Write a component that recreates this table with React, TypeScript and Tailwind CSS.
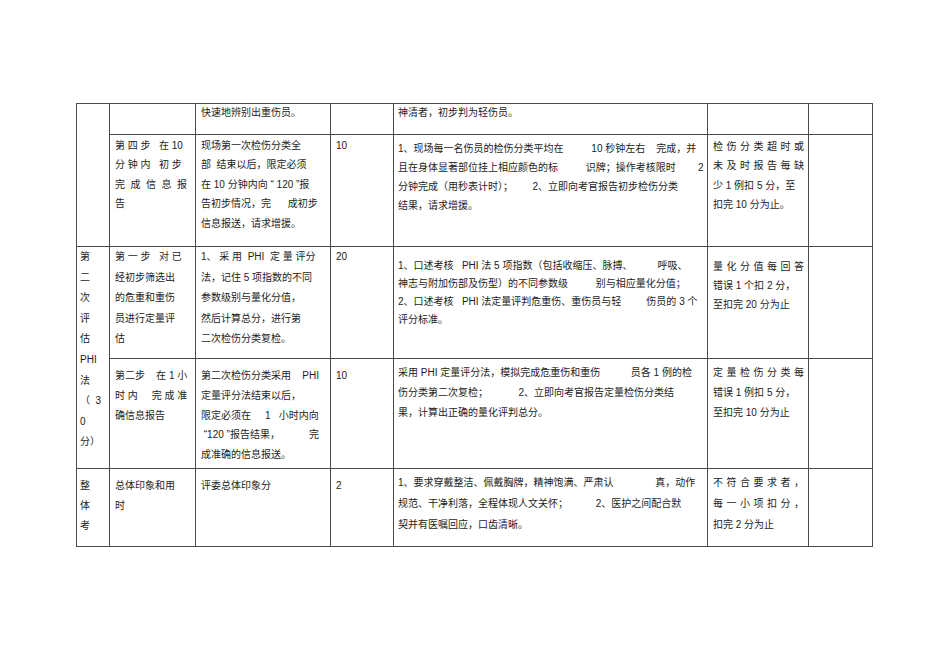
import React from "react";

type Line = string | string[];

function Cell({
  lines = [],
  cls = "",
}: {
  lines?: Line[];
  cls?: string;
}) {
  return (
    <div className={`border-r border-b border-[#4a4a4a] overflow-visible ${cls}`}>
      {lines.map((l, i) =>
        typeof l === "string" ? (
          <div key={i} className="whitespace-pre">
            {l}
          </div>
        ) : (
          <div key={i} className="flex justify-between whitespace-pre">
            {l.map((t, j) => (
              <span key={j}>{t}</span>
            ))}
          </div>
        )
      )}
    </div>
  );
}

export default function App() {
  return (
    <div className="w-[950px] h-[672px] bg-white pl-[76px] pt-[103px] text-[10px] text-[#1c1c1c] [font-family:'Liberation_Sans','Noto_Sans_CJK_SC',sans-serif]">
      <div className="grid grid-cols-[33px_86px_135px_63px_314px_101px_64px] grid-rows-[31px_112px_112px_110px_78px] w-[797px] border-l border-t border-[#4a4a4a]">
        {/* col1 rows A-B */}
        <Cell cls="row-span-2" />
        {/* Row A */}
        <Cell />
        <Cell cls="pl-[5px] leading-[18px]" lines={["快速地辨别出重伤员。"]} />
        <Cell />
        <Cell cls="pl-[4px] leading-[18px]" lines={["神清者，初步判为轻伤员。"]} />
        <Cell />
        <Cell />
        {/* Row B */}
        <Cell
          cls="pl-[5px] pr-[8px] pt-[1px] leading-[19.4px]"
          lines={["第 四 步   在 10", "分 钟 内   初 步", ["完", "成", "信", "息", "报"], "告"]}
        />
        <Cell
          cls="pl-[5px] pt-[1px] leading-[19.4px]"
          lines={[
            "现场第一次检伤分类全",
            "部  结束以后，限定必须",
            "在 10 分钟内向 “ 120 ”报",
            "告初步情况，完      成初步",
            "信息报送，请求增援。",
          ]}
        />
        <Cell cls="pl-[5px] pt-[1px] leading-[19.4px]" lines={["10"]} />
        <Cell
          cls="pl-[4px] pt-[4px] leading-[19px]"
          lines={[
            "1、现场每一名伤员的检伤分类平均在          10 秒钟左右    完成，并",
            "且在身体显著部位挂上相应颜色的标          识牌；操作考核限时        2",
            "分钟完成（用秒表计时）；       2、立即向考官报告初步检伤分类",
            "结果，请求增援。",
          ]}
        />
        <Cell
          cls="pl-[5px] pr-[4px] pt-[2px] leading-[19.4px]"
          lines={[
            ["检", "伤", "分", "类", "超", "时", "或"],
            ["未", "及", "时", "报", "告", "每", "缺"],
            "少 1 例扣 5 分，至",
            "扣完 10 分为止。",
          ]}
        />
        <Cell />
        {/* col1 rows C-D */}
        <Cell
          cls="row-span-2 pl-[3px] leading-[20.6px]"
          lines={["第", "二", "次", "评", "估", "PHI", "法", "（  3", "0", "分）"]}
        />
        {/* Row C */}
        <Cell
          cls="pl-[5px] leading-[20.6px]"
          lines={["第 一 步   对 已", "经初步筛选出", "的危重和重伤", "员进行定量评", "估"]}
        />
        <Cell
          cls="pl-[5px] leading-[20.6px]"
          lines={[
            "1、 采 用  PHI  定 量 评分",
            "法，记住 5 项指数的不同",
            "参数级别与量化分值，",
            "然后计算总分，进行第",
            "二次检伤分类复检。",
          ]}
        />
        <Cell cls="pl-[5px] leading-[20.6px]" lines={["20"]} />
        <Cell
          cls="pl-[4px] pt-[10px] leading-[18px]"
          lines={[
            "1、口述考核   PHI 法 5 项指数（包括收缩压、脉搏、         呼吸、",
            "神志与附加伤部及伤型）的不同参数级          别与相应量化分值；",
            "2、口述考核   PHI 法定量评判危重伤、重伤员与轻         伤员的 3 个",
            "评分标准。",
          ]}
        />
        <Cell
          cls="pl-[5px] pr-[4px] pt-[10px] leading-[19px]"
          lines={[["量", "化", "分", "值", "每", "回", "答"], "错误 1 个扣 2 分，", "至扣完 20 分为止"]}
        />
        <Cell />
        {/* Row D */}
        <Cell
          cls="pl-[5px] pt-[7px] leading-[19.8px]"
          lines={["第二步    在 1 小", "时 内     完 成 准", "确信息报告"]}
        />
        <Cell
          cls="pl-[5px] pr-[11px] pt-[7px] leading-[19.8px]"
          lines={[
            ["第二次检伤分类采用", "PHI"],
            "定量评分法结束以后，",
            "限定必须在     1   小时内向",
            [" “120 ”报告结果，", "完"],
            "成准确的信息报送。",
          ]}
        />
        <Cell cls="pl-[5px] pt-[7px] leading-[19.8px]" lines={["10"]} />
        <Cell
          cls="pl-[4px] pt-[4px] leading-[20px]"
          lines={[
            "采用 PHI 定量评分法，模拟完成危重伤和重伤           员各 1 例的检",
            "伤分类第二次复检；           2、立即向考官报告定量检伤分类结",
            "果，计算出正确的量化评判总分。",
          ]}
        />
        <Cell
          cls="pl-[5px] pr-[4px] pt-[4px] leading-[20px]"
          lines={[["定", "量", "检", "伤", "分", "类", "每"], "错误 1 例扣 5 分，", "至扣完 10 分为止"]}
        />
        <Cell />
        {/* Row E */}
        <Cell cls="pl-[3px] pt-[7px] leading-[20px]" lines={["整", "体", "考"]} />
        <Cell cls="pl-[5px] pt-[7px] leading-[20px]" lines={["总体印象和用", "时"]} />
        <Cell cls="pl-[5px] pt-[7px] leading-[20px]" lines={["评委总体印象分"]} />
        <Cell cls="pl-[5px] pt-[7px] leading-[20px]" lines={["2"]} />
        <Cell
          cls="pl-[4px] pt-[4px] leading-[20.8px]"
          lines={[
            "1、要求穿戴整洁、佩戴胸牌，精神饱满、严肃认               真，动作",
            "规范、干净利落，全程体现人文关怀；          2、医护之间配合默",
            "契并有医嘱回应，口齿清晰。",
          ]}
        />
        <Cell
          cls="pl-[5px] pr-[4px] pt-[4px] leading-[20.8px]"
          lines={[
            ["不", "符", "合", "要", "求", "者", "，"],
            ["每", "一", "小", "项", "扣", "分", "，"],
            "扣完 2 分为止",
          ]}
        />
        <Cell />
      </div>
    </div>
  );
}
